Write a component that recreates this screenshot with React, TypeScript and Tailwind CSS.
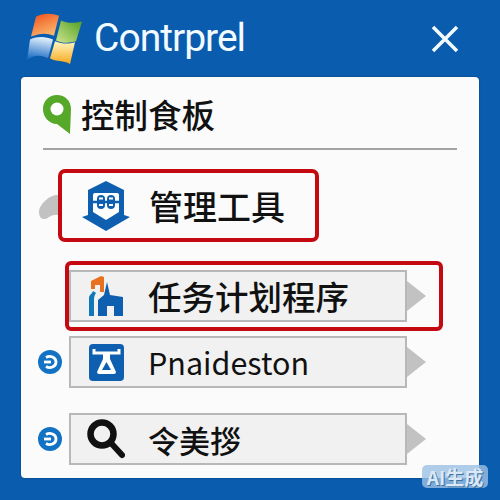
const cjk = "font-['Noto_Sans_CJK_SC','Noto_Sans',sans-serif]";

const WindowsLogo = () => (
  <svg width="56" height="51" viewBox="0 0 56 54" preserveAspectRatio="none">
    <defs>
      <linearGradient id="red" x1="0.2" y1="0" x2="0.7" y2="1">
        <stop offset="0" stopColor="#f0561f" />
        <stop offset="1" stopColor="#fbbd72" />
      </linearGradient>
      <linearGradient id="green" x1="1" y1="0" x2="0" y2="1">
        <stop offset="0" stopColor="#4f9f22" />
        <stop offset="1" stopColor="#cfe58e" />
      </linearGradient>
      <linearGradient id="blue" x1="0.5" y1="0" x2="0.3" y2="1">
        <stop offset="0" stopColor="#e4f1fc" />
        <stop offset="1" stopColor="#1466c2" />
      </linearGradient>
      <linearGradient id="yellow" x1="0.5" y1="0" x2="0.5" y2="1">
        <stop offset="0" stopColor="#fff6c0" />
        <stop offset="1" stopColor="#f7a81c" />
      </linearGradient>
    </defs>
    <path d="M9 4 C15 0 25 0 32 3 L27 24 C20 21 13 21 4 25 Z" fill="url(#red)" />
    <path d="M34 8 C40 11 47 11 55 9 L49 30 C42 32 35 32 29 29 Z" fill="url(#green)" />
    <path d="M3 28 C11 24 19 25 26 28 L21 48 C14 44 7 44 0 50 Z" fill="url(#blue)" />
    <path d="M28 32 C35 35 42 35 48 33 L43 56 C37 52 29 54 23 50 Z" fill="url(#yellow)" transform="translate(0 -2)" />
  </svg>
);

const PinIcon = () => (
  <svg width="28" height="39" viewBox="0 0 28 39">
    <path d="M14 0 C22 0 28 6 28 14 L27 39 L14 29 C6 29 0 22 0 14 C0 6 6 0 14 0 Z" fill="#55a828" />
    <circle cx="14" cy="14" r="6.5" fill="#fff" />
  </svg>
);

const ShieldIcon = () => (
  <svg width="50" height="50" viewBox="0 0 50 50">
    <path d="M25 0 L43 9 L43 34 L49 36 L25 50 L1 36 L7 34 L7 9 Z" fill="#0f5fb0" />
    <path d="M14 12 H36 Q38 12 38 14 V31 L25 39 L12 31 V14 Q12 12 14 12 Z" fill="#fff" />
    <path d="M12 21 H38" stroke="#0f5fb0" strokeWidth="2.5" />
    <rect x="16" y="14" width="8" height="14" rx="4" fill="#0f5fb0" />
    <rect x="26" y="14" width="8" height="14" rx="4" fill="#0f5fb0" />
    <path d="M18 17.5 H22 M18 24 H22 M28 17.5 H32 M28 24 H32" stroke="#fff" strokeWidth="2" />
  </svg>
);

const ChurchIcon = () => (
  <svg width="35" height="40" viewBox="0 0 35 40">
    <path d="M2 5 L12 0 L15 1 V16 H11 V9 H6 V13 H2 Z" fill="#e8701e" />
    <path d="M0 40 V22 C0 19 3 18 4 15 L7 17 C5 20 5 22 5 24 V40 Z" fill="#0f78b8" />
    <path d="M9 40 V24 L15 19 L18 6 L21 19 L34 21 V40 H25 V30 H18 V40 Z" fill="#0f5fb0" />
  </svg>
);

const LiftIcon = () => (
  <svg width="35" height="37" viewBox="0 0 35 37">
    <rect width="35" height="37" rx="4" fill="#0f5fb0" />
    <path d="M5 5 V9 H30 V5" stroke="#fff" strokeWidth="3" fill="none" />
    <path d="M14 9 V15 L8 28 Q8 30 10 30 H25 Q27 30 27 28 L21 15 V9 Z" fill="#fff" />
    <path d="M17.5 18 L13 26 H22 Z" fill="#0f5fb0" />
  </svg>
);

const SearchIcon = () => (
  <svg width="38" height="40" viewBox="0 0 38 40">
    <circle cx="15" cy="15" r="11.5" fill="none" stroke="#111" strokeWidth="6.5" />
    <path d="M24 24 L35 36" stroke="#111" strokeWidth="6" strokeLinecap="round" />
  </svg>
);

const BackCircle = () => (
  <svg width="24" height="24" viewBox="0 0 24 24">
    <circle cx="12" cy="12" r="12" fill="#1272c4" />
    <path d="M8 7.5 C12 5 18 7 18 12 C18 17 12 19 8 16.5" fill="none" stroke="#fff" strokeWidth="2.8" />
    <path d="M6 12 H13" stroke="#fff" strokeWidth="2.8" />
  </svg>
);

const Row = ({ icon, text, size }: { icon: React.ReactNode; text: string; size: string }) => (
  <div className="flex items-center">
    <div className="w-[338px] h-[52px] flex items-center bg-[#f1f1f1] border-2 border-[#b8b8b8]">
      <div className="w-[77px] flex justify-center shrink-0 pr-[7px]">{icon}</div>
      <span className={`${size} ${cjk} text-[#111] leading-none whitespace-nowrap`}>{text}</span>
    </div>
    <div className="w-0 h-0 border-y-[15px] border-y-transparent border-l-[19px] border-l-[#c2c2c2]" />
  </div>
);

export default function App() {
  return (
    <div className="w-[500px] h-[500px] bg-[#0a5cae] overflow-hidden relative">
      <header className="h-[77px] pl-[27px] pr-[41px] flex items-center justify-between">
        <div className="flex items-center gap-[11px] pb-[1px]">
          <WindowsLogo />
          <span className="text-[39px] leading-none text-[#f2fbff] font-['Roboto',sans-serif] tracking-[-1px]">Contrprel</span>
        </div>
        <svg width="28" height="28" viewBox="0 0 28 28">
          <path d="M2 2 L26 26 M26 2 L2 26" stroke="#f4fbff" strokeWidth="3.5" />
        </svg>
      </header>

      <main className="relative mx-[21px] w-[458px] h-[401px] bg-[#fbfbfb] rounded-[4px] shadow-[0_0_2px_#06386e] px-[22px]">
        <div className="h-[73px] flex items-center gap-[10px] pt-[3px] border-b-2 border-[#a3a3a3]">
          <PinIcon />
          <span className={`text-[33.5px] ${cjk} font-medium text-[#111] leading-none`}>控制食板</span>
        </div>

        <div className="absolute left-[18px] top-[118px]">
          <svg width="33" height="25" viewBox="0 0 33 25">
            <path d="M0 17 C0 10 10 0 18 0 C26 0 33 13 33 20 C33 25 27 25 24 22 C20 19 15 19 10 22 C5 26 0 24 0 17 Z" fill="#c2c2c2" />
          </svg>
        </div>

        <div className="ml-[15px] mt-[19px] w-[261px] h-[73px] flex items-center border-[4px] border-[#c40a10] rounded-[7px] bg-[#fbfbfb] relative">
          <div className="w-[87px] flex justify-center"><ShieldIcon /></div>
          <span className={`text-[34px] ${cjk} font-medium text-[#111] leading-none`}>管理工具</span>
        </div>

        <div className="ml-[22px] mt-[19px] w-[378px] h-[70px] flex items-center border-[4px] border-[#c40a10] rounded-[6px]">
          <Row icon={<ChurchIcon />} text="任务计划程序" size="text-[33.5px] font-medium" />
        </div>

        <div className="flex items-center gap-[7px] ml-[-5px] mt-[5px]">
          <BackCircle />
          <Row icon={<LiftIcon />} text="Pnaideston" size="text-[30.5px]" />
        </div>

        <div className="flex items-center gap-[7px] ml-[-5px] mt-[25px]">
          <BackCircle />
          <Row icon={<SearchIcon />} text="令美拶" size="text-[31px] font-medium" />
        </div>
      </main>

      <div className="absolute left-[422px] top-[465px] w-[66px] h-[23px] rounded-[5px] bg-[#9cc0e4cc] flex items-center justify-center">
        <span className={`text-[19px] ${cjk} font-bold text-[#dbe8f5] leading-none [text-shadow:1px_1px_0_#3d6f9f]`}>AI生成</span>
      </div>
    </div>
  );
}
